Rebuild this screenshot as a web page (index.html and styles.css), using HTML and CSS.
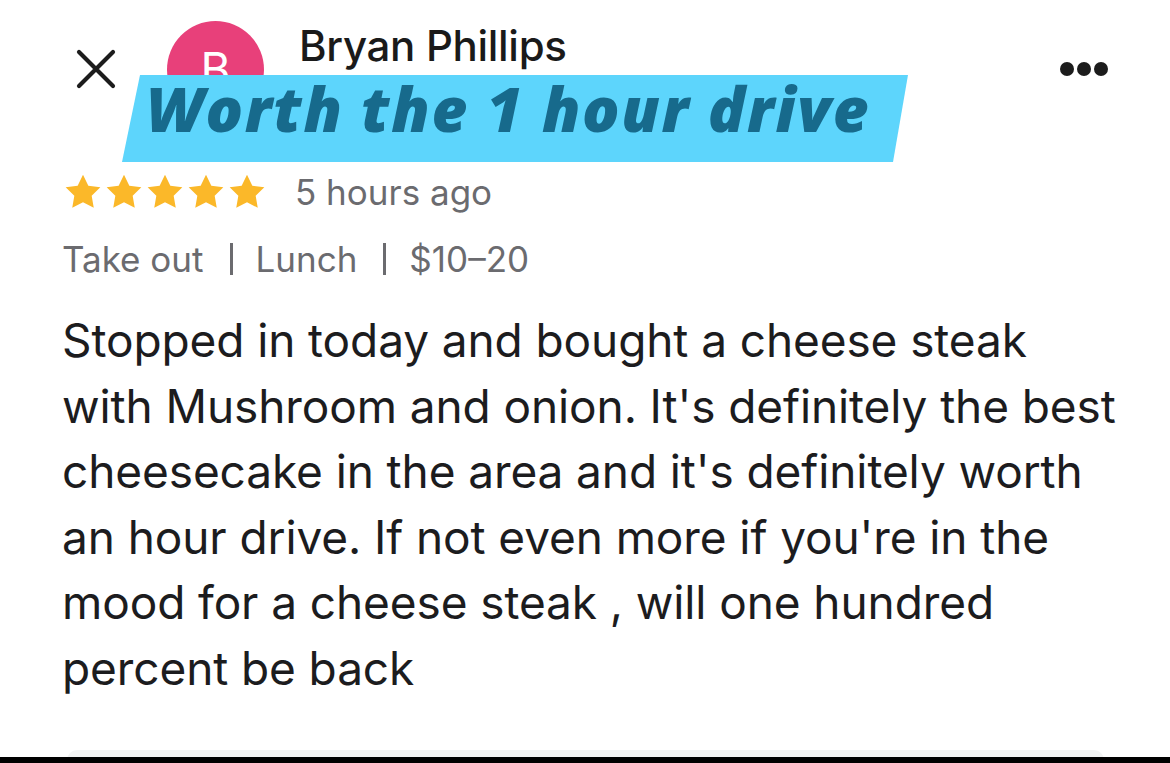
FILE: index.html
```html
<!DOCTYPE html>
<html lang="en">
<head>
<meta charset="utf-8">
<title>Review</title>
<link rel="stylesheet" href="styles.css">
</head>
<body>
<div class="page">
  <header class="head">
    <div class="close" aria-label="Close">
      <svg viewBox="0 0 40 40" width="40" height="40"><path d="M3 3 L37 37 M37 3 L3 37" stroke="#1c1c1c" stroke-width="4.2" stroke-linecap="round" fill="none"/></svg>
    </div>
    <div class="avatar">B</div>
    <div class="name">Bryan Phillips</div>
    <div class="more" aria-label="More">
      <span class="dot"></span><span class="dot"></span><span class="dot"></span>
    </div>
    <div class="banner"><span>Worth the 1 hour drive</span></div>
  </header>
  <div class="rating">
    <div class="stars">
      <svg viewBox="0 0 24 24" class="star"><path d="M12 1.6l3.2 6.6 7.2 1-5.2 5.1 1.25 7.2L12 18.1l-6.45 3.4 1.25-7.2L1.6 9.2l7.2-1z"/></svg>
      <svg viewBox="0 0 24 24" class="star"><path d="M12 1.6l3.2 6.6 7.2 1-5.2 5.1 1.25 7.2L12 18.1l-6.45 3.4 1.25-7.2L1.6 9.2l7.2-1z"/></svg>
      <svg viewBox="0 0 24 24" class="star"><path d="M12 1.6l3.2 6.6 7.2 1-5.2 5.1 1.25 7.2L12 18.1l-6.45 3.4 1.25-7.2L1.6 9.2l7.2-1z"/></svg>
      <svg viewBox="0 0 24 24" class="star"><path d="M12 1.6l3.2 6.6 7.2 1-5.2 5.1 1.25 7.2L12 18.1l-6.45 3.4 1.25-7.2L1.6 9.2l7.2-1z"/></svg>
      <svg viewBox="0 0 24 24" class="star"><path d="M12 1.6l3.2 6.6 7.2 1-5.2 5.1 1.25 7.2L12 18.1l-6.45 3.4 1.25-7.2L1.6 9.2l7.2-1z"/></svg>
    </div>
    <span class="time">5 hours ago</span>
  </div>
  <div class="meta">
    <span>Take out</span><span class="sep"></span><span>Lunch</span><span class="sep"></span><span>$10–20</span>
  </div>
  <p class="body">Stopped in today and bought a cheese steak<br>with Mushroom and onion. It's definitely the best<br>cheesecake in the area and it's definitely worth<br>an hour drive. If not even more if you're in the<br>mood for a cheese steak , will one hundred<br>percent be back</p>
</div>
<div class="next-card"></div>
<div class="bottom-bar"></div>
</body>
</html>
```
FILE: styles.css
```css
html, body {
  margin: 0;
  padding: 0;
  background: #ffffff;
}
body {
  width: 1170px;
  height: 763px;
  overflow: hidden;
  position: relative;
  font-family: Inter, "Noto Sans", "Liberation Sans", sans-serif;
  color: #1c1c1e;
}
.page {
  padding-left: 62px;
  height: 750px;
}
.head {
  position: relative;
  display: flex;
  align-items: flex-start;
  height: 168px;
}
.close {
  margin-left: 14px;
  margin-top: 49px;
  width: 40px;
  height: 40px;
}
.close svg { display: block; }
.avatar {
  margin-left: 51px;
  margin-top: 21px;
  width: 97px;
  height: 97px;
  border-radius: 50%;
  background: #e8407a;
  color: #ffffff;
  font-size: 46px;
  line-height: 97px;
  text-align: center;
  font-weight: 400;
}
.name {
  margin-left: 35px;
  margin-top: 22px;
  font-size: 42px;
  line-height: 48px;
  font-weight: 500;
  color: #1a1a1a;
  letter-spacing: -0.3px;
}
.more {
  margin-left: auto;
  margin-right: 62px;
  margin-top: 62px;
  display: flex;
  gap: 3px;
}
.dot {
  width: 14px;
  height: 14px;
  border-radius: 50%;
  background: #1c1c1c;
}
.banner {
  position: absolute;
  left: 60px;
  top: 75px;
  width: 786px;
  height: 87px;
  background: #5dd5fc;
  clip-path: polygon(18px 0, 100% 0, calc(100% - 15px) 100%, 0 100%);
}
.banner span {
  display: block;
  padding-left: 24px;
  padding-top: 0;
  margin-top: -5px;
  font-family: "Open Sans", Lato, sans-serif;
  font-weight: 800;
  font-style: italic;
  font-size: 62px;
  color: #176a8c;
  letter-spacing: 1.6px;
  line-height: 76px;
}
.rating {
  display: flex;
  align-items: center;
  margin-top: 2px;
  height: 44px;
}
.stars {
  display: flex;
  gap: 1px;
  margin-left: 1px;
}
.star {
  width: 40px;
  height: 40px;
  fill: #fbb829;
}
.time {
  margin-left: 28px;
  font-size: 35px;
  color: #6b6b6f;
}
.meta {
  margin-top: 24px;
  font-size: 35px;
  color: #6b6b6f;
  display: flex;
  align-items: center;
  height: 42px;
}
.sep {
  width: 3px;
  height: 32px;
  background: #6b6b6f;
  margin: 0 23px 0 26px;
}
.body {
  margin: 28px 0 0 0;
  font-size: 46px;
  line-height: 65.6px;
  color: #1c1c1e;
  letter-spacing: -0.1px;
}
.next-card {
  position: absolute;
  left: 67px;
  top: 750px;
  width: 1037px;
  height: 20px;
  border-radius: 10px;
  background: #f3f4f4;
}
.bottom-bar {
  position: absolute;
  left: 0;
  bottom: 0;
  width: 1170px;
  height: 6px;
  background: #000000;
}
```
